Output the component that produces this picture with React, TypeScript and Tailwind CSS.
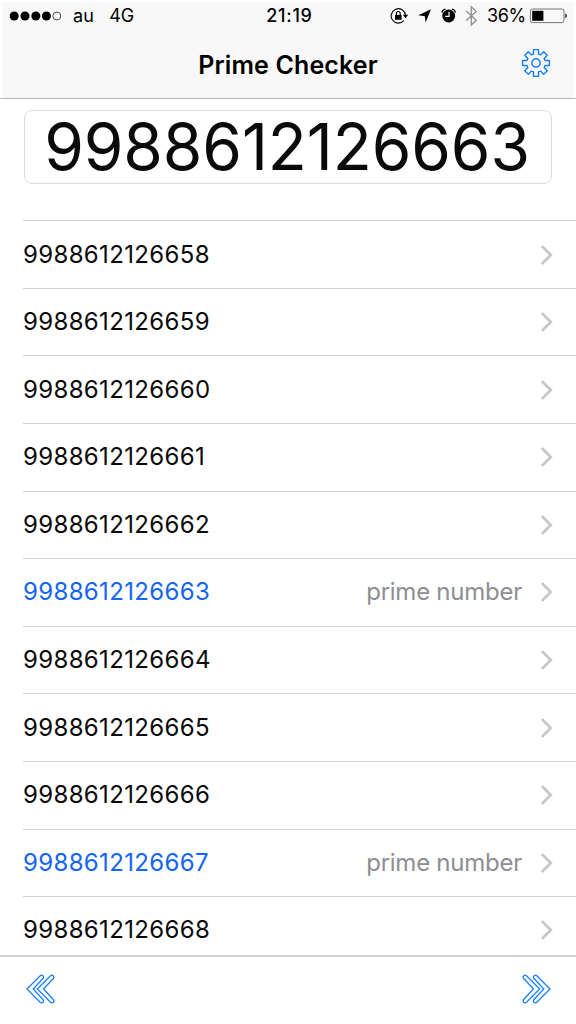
import type { SVGProps } from "react";

interface NumberItem {
  value: string;
  prime?: boolean;
}

const numbers: NumberItem[] = [
  { value: "9988612126658" },
  { value: "9988612126659" },
  { value: "9988612126660" },
  { value: "9988612126661" },
  { value: "9988612126662" },
  { value: "9988612126663", prime: true },
  { value: "9988612126664" },
  { value: "9988612126665" },
  { value: "9988612126666" },
  { value: "9988612126667", prime: true },
  { value: "9988612126668" },
];

// Eight straight-sided teeth around the hub
const gearPoints = Array.from({ length: 8 }, (_, i) => {
  const a = (i * Math.PI) / 4;
  return [
    [-2.5, -9],
    [-2.5, -13.4],
    [2.5, -13.4],
    [2.5, -9],
  ]
    .map(([x, y]) => {
      const px = x * Math.cos(a) - y * Math.sin(a);
      const py = x * Math.sin(a) + y * Math.cos(a);
      return `${px.toFixed(2)},${py.toFixed(2)}`;
    })
    .join(" ");
}).join(" ");

const GearIcon = () => (
  <svg width="30" height="30" viewBox="-15 -15 30 30" fill="none" stroke="#157efb" strokeWidth="1.4">
    <polygon points={gearPoints} strokeLinejoin="round" />
    <circle r="4.2" />
  </svg>
);

const DoubleChevron = (props: SVGProps<SVGSVGElement>) => {
  const arm =
    "M1 15 L14.2 1.8 Q15.6 .6 16.9 1.8 Q18.2 3.2 17 4.5 L7.2 15 L17 25.5 Q18.2 26.8 16.9 28.2 Q15.6 29.4 14.2 28.2 Z";
  return (
    <svg width="30" height="30" viewBox="0 0 30 30" fill="none" stroke="#157efb" strokeWidth="1.25" {...props}>
      <path d={arm} />
      <path d={arm} transform="translate(10.3 0)" />
    </svg>
  );
};

const Disclosure = () => (
  <svg width="14" height="22" viewBox="0 0 14 22" fill="none" stroke="#c7c7cc" strokeWidth="2.7" className="shrink-0">
    <path d="M1.8 2 L10.8 11 L1.8 20" />
  </svg>
);

const SignalDots = () => (
  <svg width="54" height="12" viewBox="0 0 54 12" className="shrink-0">
    <circle cx="7.2" cy="6" r="4.5" />
    <circle cx="18" cy="6" r="4.5" />
    <circle cx="28.8" cy="6" r="4.5" />
    <circle cx="39.4" cy="6" r="4.5" />
    <circle cx="49.8" cy="6" r="4" fill="none" stroke="#222" strokeWidth=".8" />
  </svg>
);

const StatusIcons = () => (
  <svg width="90" height="24" viewBox="390 4 90 24" className="shrink-0">
    {/* Rotation lock */}
    <path d="M403.8 20.6 A7.2 7.2 0 1 1 405.5 15" fill="none" stroke="#000" strokeWidth="1.1" />
    <path d="M402.9 14.8 H408.2 L405.5 18.2 Z" />
    <rect x="395" y="15" width="6.6" height="4.8" rx=".5" />
    <path d="M396.4 15.4 V13.4 A1.9 1.9 0 0 1 400.2 13.4 V15.4" fill="none" stroke="#000" strokeWidth="1.2" />
    {/* Location arrow */}
    <path d="M431 9.3 L425.6 22.5 L424.8 16.2 L418.3 15.3 Z" />
    {/* Alarm */}
    <circle cx="448.7" cy="16" r="6.4" />
    <path d="M442 12.6 A4 4 0 0 1 445.5 9.2 M451.9 9.2 A4 4 0 0 1 455.4 12.6" fill="none" stroke="#000" strokeWidth="1.3" />
    <path d="M449 11.8 V16.4 H445.3" fill="none" stroke="#fff" strokeWidth="1.2" />
    {/* Bluetooth */}
    <path d="M466.2 11 L476.2 20.2 L471.3 25 V6.8 L476.2 11.4 L466.2 20.6" fill="none" stroke="#8e8e93" strokeWidth="1.3" />
  </svg>
);

const Battery = () => (
  <svg width="38" height="16" viewBox="0 0 38 16" className="shrink-0">
    <rect x="1.4" y="1" width="33.6" height="13.6" rx="2" fill="none" stroke="#777" strokeWidth="1" />
    <rect x="3.2" y="2.8" width="11.2" height="10" />
    <path d="M36.2 5.6 Q38 6 38 7.8 Q38 9.8 36.2 10.2 Z" fill="#333" />
  </svg>
);

function StatusBar() {
  return (
    <div className="grid h-[28px] grid-cols-[264px_47px_1fr] items-center text-[18px] leading-none">
      <div className="flex items-center pl-[5px]">
        <SignalDots />
        <span className="ml-[12px] tracking-[0.2px]">au</span>
        <span className="ml-[15px]">4G</span>
      </div>
      <span className="whitespace-nowrap text-center font-medium tracking-[0.7px]">21:19</span>
      <div className="flex items-center pl-[77px]">
        <StatusIcons />
        <span className="ml-[7px] w-[42px] whitespace-nowrap tracking-[-0.4px]">36%</span>
        <Battery />
      </div>
    </div>
  );
}

function NumberRow({ item }: { item: NumberItem }) {
  return (
    <li className="flex h-[67.58px] shrink-0 items-center border-t border-[#d3d2d6] pr-[22px] text-[24px]">
      <span className={`tracking-[0.35px] ${item.prime ? "text-[#1464f6]" : "text-[#0a0a0a]"}`}>{item.value}</span>
      {item.prime && <span className="ml-auto mr-[18px] tracking-[-0.25px] text-[#8e8e93]">prime number</span>}
      <span className={item.prime ? "" : "ml-auto"}>
        <Disclosure />
      </span>
    </li>
  );
}

export default function App() {
  return (
    <div className="flex h-[1024px] w-[576px] flex-col overflow-hidden bg-white font-['Inter',sans-serif] text-black">
      <header className="h-[99px] shrink-0 border-b border-[#b6b6b8] bg-white pt-[2px]">
        <div className="mx-[2px] h-full bg-[#f8f8f8]">
          <StatusBar />
          <div className="grid h-[66px] grid-cols-[1fr_auto_1fr] items-center">
            <h1 className="col-start-2 whitespace-nowrap pt-[5px] text-[25px] font-semibold leading-none tracking-[0.12px]">
              Prime Checker
            </h1>
            <button className="mr-[23px] justify-self-end">
              <GearIcon />
            </button>
          </div>
        </div>
      </header>

      <main className="min-h-0 flex-1 overflow-hidden">
        <div className="ml-[24px] mt-[11px] flex h-[74px] w-[528px] items-center justify-center rounded-[8px] border border-[#dcdcdc]">
          <span className="mr-[2px] text-[64px] leading-none tracking-[-0.1px] text-[#0a0a0a]">9988612126663</span>
        </div>
        <ul className="ml-[23px] mt-[36.3px] flex flex-col">
          {numbers.map((item) => (
            <NumberRow key={item.value} item={item} />
          ))}
        </ul>
      </main>

      <footer className="flex h-[69px] shrink-0 items-start justify-between border-t-2 border-[#d0d0d0] bg-white pl-[26px] pr-[25px] pt-[17px]">
        <button>
          <DoubleChevron />
        </button>
        <button>
          <DoubleChevron className="-scale-x-100" />
        </button>
      </footer>
    </div>
  );
}
